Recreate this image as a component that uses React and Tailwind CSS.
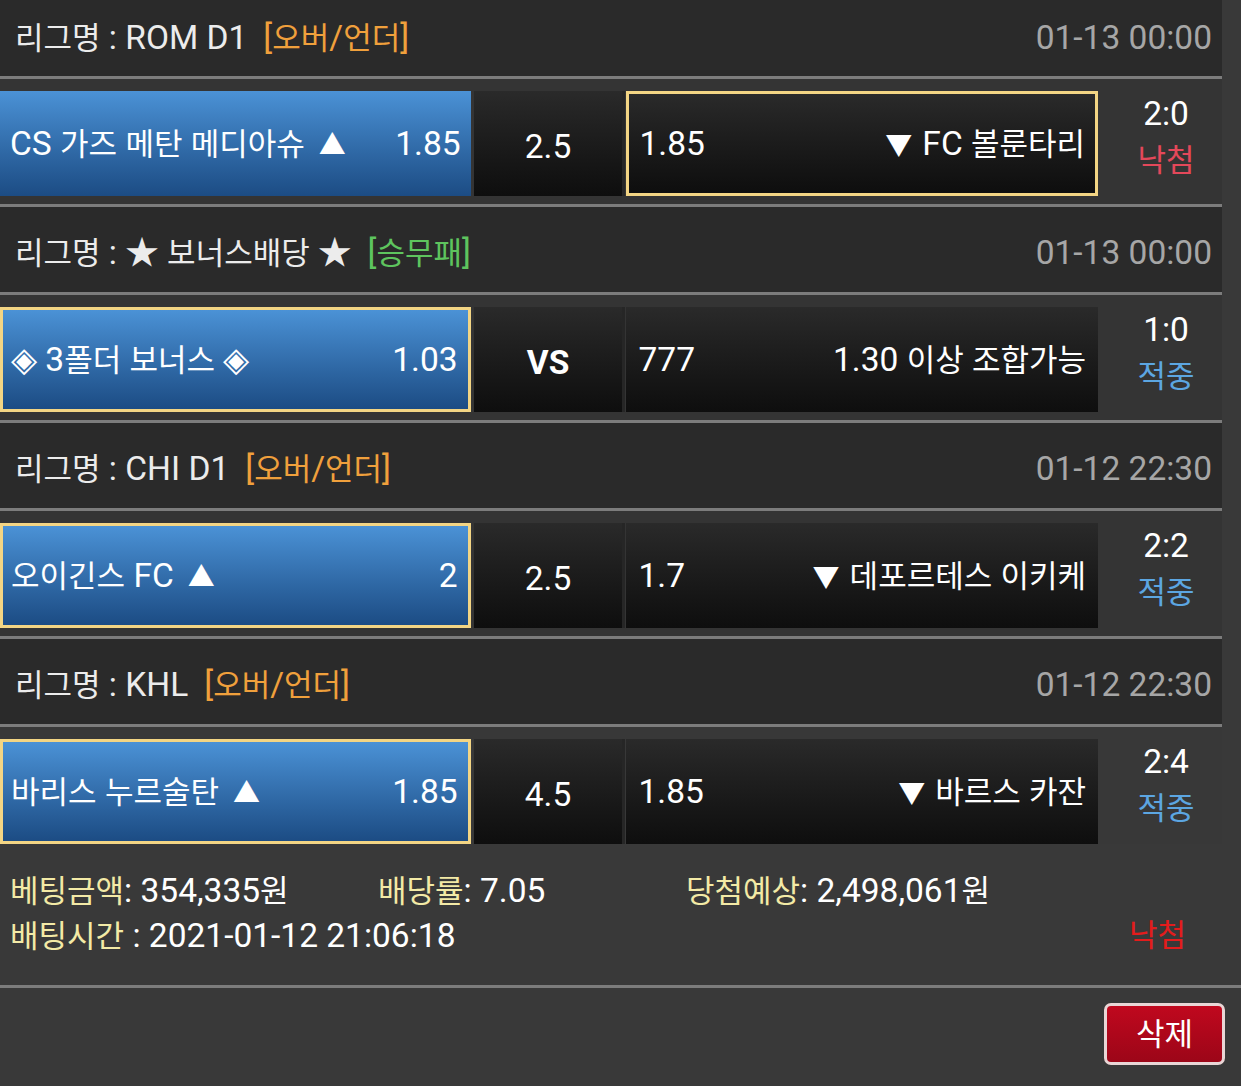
const HANGUL = /([\u1100-\u11FF\u3130-\u318F\uAC00-\uD7AF]+)/;

// 한글은 31px, 숫자/영문은 Roboto 33.5px 로 렌더링
function T({ children }) {
  return String(children)
    .split(HANGUL)
    .map((part, i) =>
      HANGUL.test(part) ? (
        <span key={i} className="text-[31px]">
          {part}
        </span>
      ) : (
        part
      )
    );
}

const matches = [
  {
    league: 'ROM D1',
    tag: '[오버/언더]',
    tagColor: 'text-[#f0a03c]',
    date: '01-13 00:00',
    home: 'CS 가즈 메탄 메디아슈',
    homeMark: '▲',
    homeOdds: '1.85',
    mid: '2.5',
    awayOdds: '1.85',
    awayMark: '▼',
    away: 'FC 볼룬타리',
    pick: 'away',
    score: '2:0',
    result: '낙첨',
  },
  {
    league: '★ 보너스배당 ★',
    tag: '[승무패]',
    tagColor: 'text-[#5ec45e]',
    date: '01-13 00:00',
    home: '◈ 3폴더 보너스 ◈',
    homeOdds: '1.03',
    mid: 'VS',
    awayOdds: '777',
    away: '1.30 이상 조합가능',
    pick: 'home',
    score: '1:0',
    result: '적중',
  },
  {
    league: 'CHI D1',
    tag: '[오버/언더]',
    tagColor: 'text-[#f0a03c]',
    date: '01-12 22:30',
    home: '오이긴스 FC',
    homeMark: '▲',
    homeOdds: '2',
    mid: '2.5',
    awayOdds: '1.7',
    awayMark: '▼',
    away: '데포르테스 이키케',
    pick: 'home',
    score: '2:2',
    result: '적중',
  },
  {
    league: 'KHL',
    tag: '[오버/언더]',
    tagColor: 'text-[#f0a03c]',
    date: '01-12 22:30',
    home: '바리스 누르술탄',
    homeMark: '▲',
    homeOdds: '1.85',
    mid: '4.5',
    awayOdds: '1.85',
    awayMark: '▼',
    away: '바르스 카잔',
    pick: 'home',
    score: '2:4',
    result: '적중',
  },
];

function Divider() {
  return <div className="h-[3px] bg-[#7c7c7c]" />;
}

function LeagueHeader({ m, first }) {
  return (
    <div
      className={`flex items-center justify-between bg-[#2a2a2a] pl-[15px] pr-[10px] ${
        first ? 'h-[76px]' : 'h-[85px] pt-[6px]'
      }`}
    >
      <div className="flex items-center text-[#ececec]">
        <span>
          <T>리그명 : </T>
          <T>{m.league}</T>
        </span>
        <span className={`ml-[16px] ${m.tagColor}`}>
          <T>{m.tag}</T>
        </span>
      </div>
      <span className="text-[#a6a6a6]">{m.date}</span>
    </div>
  );
}

function MatchRow({ m, last }) {
  const homeCls =
    m.pick === 'home'
      ? 'border-[3px] border-[#f3d584] pl-[8px] pr-[10px]'
      : 'pl-[10px] pr-[10px]';
  const awayCls =
    m.pick === 'away'
      ? 'border-[3px] border-[#f3d584] pl-[10px] pr-[10px]'
      : 'pl-[12px] pr-[12px]';

  return (
    <div className={`flex pt-[12px] ${last ? 'pb-0 bg-[#383838]' : 'pb-[8px] bg-[#343434]'}`}>
      <div
        className={`flex h-[105px] w-[471px] items-center justify-between bg-gradient-to-b from-[#4b92d6] to-[#1c4c84] text-white ${homeCls}`}
      >
        <span>
          <T>{m.home}</T>
          {m.homeMark && <span className="ml-[14px] text-[27px]">{m.homeMark}</span>}
        </span>
        <span>{m.homeOdds}</span>
      </div>
      <div className="ml-[3px] flex h-[105px] w-[149px] items-center justify-center bg-gradient-to-b from-[#2a2a2a] to-[#0e0e0e] pt-[6px] text-white">
        <span className={m.mid === 'VS' ? 'font-bold' : ''}>{m.mid}</span>
      </div>
      <div className="w-[3px] bg-[#262626]" />
      <div
        className={`ml-[1px] flex h-[105px] w-[472px] items-center justify-between bg-gradient-to-b from-[#2a2a2a] to-[#0e0e0e] text-white ${awayCls}`}
      >
        <span>{m.awayOdds}</span>
        <span>
          {m.awayMark && <span className="mr-[10px] text-[27px]">{m.awayMark}</span>}
          <T>{m.away}</T>
        </span>
      </div>
      <div className="flex w-[124px] flex-col items-center pl-[12px] leading-[45px]">
        <span className="text-white">{m.score}</span>
        <span className={`mt-[2px] text-[31px] ${m.result === '낙첨' ? 'text-[#e4485a]' : 'text-[#5ca6e2]'}`}>
          {m.result}
        </span>
      </div>
    </div>
  );
}

export default function App() {
  return (
    <div
      className="min-h-screen w-[1241px] overflow-hidden bg-[#393939] text-[33.5px] leading-none"
      style={{ fontFamily: 'Roboto, "Noto Sans CJK KR", sans-serif' }}
    >
      <div className="w-[1222px]">
        {matches.map((m, i) => (
          <div key={i}>
            <LeagueHeader m={m} first={i === 0} />
            <Divider />
            <MatchRow m={m} last={i === matches.length - 1} />
            {i < matches.length - 1 && <Divider />}
          </div>
        ))}
      </div>

      {/* 베팅 정보 */}
      <div className="pl-[10px] pt-[24px] pb-[27px]">
        <div className="flex h-[45px] items-center">
          <div className="w-[368px]">
            <span className="text-[31px] text-[#f3eaa6]">베팅금액</span>
            <span className="text-white">
              <T>: 354,335원</T>
            </span>
          </div>
          <div className="w-[308px]">
            <span className="text-[31px] text-[#f3eaa6]">배당률</span>
            <span className="text-white">: 7.05</span>
          </div>
          <div>
            <span className="text-[31px] text-[#f3eaa6]">당첨예상</span>
            <span className="text-white">
              <T>: 2,498,061원</T>
            </span>
          </div>
        </div>
        <div className="flex h-[45px] w-[1212px] items-center justify-between">
          <div>
            <span className="text-[31px] text-[#f3eaa6]">배팅시간</span>
            <span className="text-white"> : 2021-01-12 21:06:18</span>
          </div>
          <span className="mr-[36px] text-[31px] text-[#e41c1c]">낙첨</span>
        </div>
      </div>
      <div className="h-[3px] bg-[#7c7c7c]" />

      <div className="flex justify-end pr-[16px] pt-[15px] pb-[20px]">
        <button className="flex h-[62px] w-[121px] items-center justify-center rounded-[7px] border-[3px] border-[#e9d6d6] bg-gradient-to-b from-[#c0081e] to-[#9c0618] text-[31px] text-white">
          삭제
        </button>
      </div>
    </div>
  );
}
